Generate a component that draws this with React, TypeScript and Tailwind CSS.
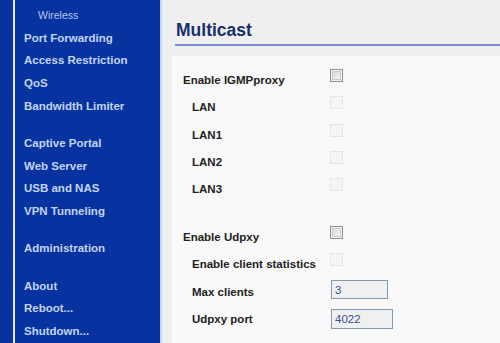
import React from "react"

const navGroups: { label: string; sub?: boolean }[][] = [
  [
    { label: "Wireless", sub: true },
    { label: "Port Forwarding" },
    { label: "Access Restriction" },
    { label: "QoS" },
    { label: "Bandwidth Limiter" },
  ],
  [{ label: "Captive Portal" }, { label: "Web Server" }, { label: "USB and NAS" }, { label: "VPN Tunneling" }],
  [{ label: "Administration" }],
  [{ label: "About" }, { label: "Reboot..." }, { label: "Shutdown..." }],
]

function Checkbox({ disabled }: { disabled?: boolean }) {
  if (disabled) {
    return <div className="mt-[2px] w-[13px] h-[13px] border border-[#e6e6e6] bg-[#f5f5f5]" />
  }
  return (
    <div className="mt-[2px] w-[13px] h-[13px] border border-[#8f8f8f] bg-[#f4f4f4] p-px">
      <div className="w-full h-full border border-[#c9c9c9] bg-gradient-to-br from-[#d9d9d9] to-[#f7f7f7]" />
    </div>
  )
}

function Row({ label, sub, children }: { label: string; sub?: boolean; children: React.ReactNode }) {
  return (
    <div className="flex h-[27.33px]">
      <div className={`${sub ? "pl-[9px] w-[147px]" : "w-[147px]"} leading-[27.33px] font-bold text-[#222]`}>{label}</div>
      <div>{children}</div>
    </div>
  )
}

export default function App() {
  return (
    <div className="w-[500px] h-[343px] overflow-hidden flex font-['Liberation_Sans',Arial,sans-serif]">
      {/* left rail */}
      <div className="w-[13px] bg-[#0633a0]" />
      <div className="w-[2px] bg-[#dfe7fb]" />
      <nav className="w-[145px] bg-[#0633a0] pt-[4px] pl-[9px]">
        {navGroups.map((group, gi) => (
          <div key={gi} className={gi > 0 ? "mt-[14.67px]" : ""}>
            {group.map((item) =>
              item.sub ? (
                <div key={item.label} className="h-[22.67px] leading-[22.67px] pl-[14px] text-[10.5px] text-[#b4c8f0]">
                  {item.label}
                </div>
              ) : (
                <div key={item.label} className="h-[22.67px] leading-[22.67px] text-[11.5px] font-bold text-[#c3d4f5]">
                  {item.label}
                </div>
              )
            )}
          </div>
        ))}
      </nav>
      <div className="w-[2px] bg-[#c6d3f2]" />

      {/* main */}
      <main className="flex-1 bg-[#efefef] flex flex-col">
        <h1 className="ml-[13px] pl-px pt-[20px] pb-[3px] leading-[21px] text-[17.5px] font-bold text-[#172f6b] border-b-2 border-[#7391d2]">
          Multicast
        </h1>
        <div className="mt-[10px] ml-[10px] flex-1 bg-[#f9f9f9] pt-[11px] pl-[11px] text-[11.5px]">
          <Row label="Enable IGMPproxy">
            <Checkbox />
          </Row>
          <Row label="LAN" sub>
            <Checkbox disabled />
          </Row>
          <Row label="LAN1" sub>
            <Checkbox disabled />
          </Row>
          <Row label="LAN2" sub>
            <Checkbox disabled />
          </Row>
          <Row label="LAN3" sub>
            <Checkbox disabled />
          </Row>

          <div className="h-[20.5px]" />

          <Row label="Enable Udpxy">
            <Checkbox />
          </Row>
          <Row label="Enable client statistics" sub>
            <Checkbox disabled />
          </Row>
          <Row label="Max clients" sub>
            <input
              readOnly
              value="3"
              className="ml-px mt-[1.5px] w-[57px] h-[19px] px-[3px] border border-[#7f9db9] bg-[#f0f0f0] text-[11.5px] text-[#3b4b9b] outline-none"
            />
          </Row>
          <Row label="Udpxy port" sub>
            <input
              readOnly
              value="4022"
              className="ml-px mt-[3px] w-[62px] h-[20px] px-[3px] border border-[#7f9db9] bg-[#f0f0f0] text-[11.5px] text-[#3b4b9b] outline-none"
            />
          </Row>
        </div>
      </main>
    </div>
  )
}
